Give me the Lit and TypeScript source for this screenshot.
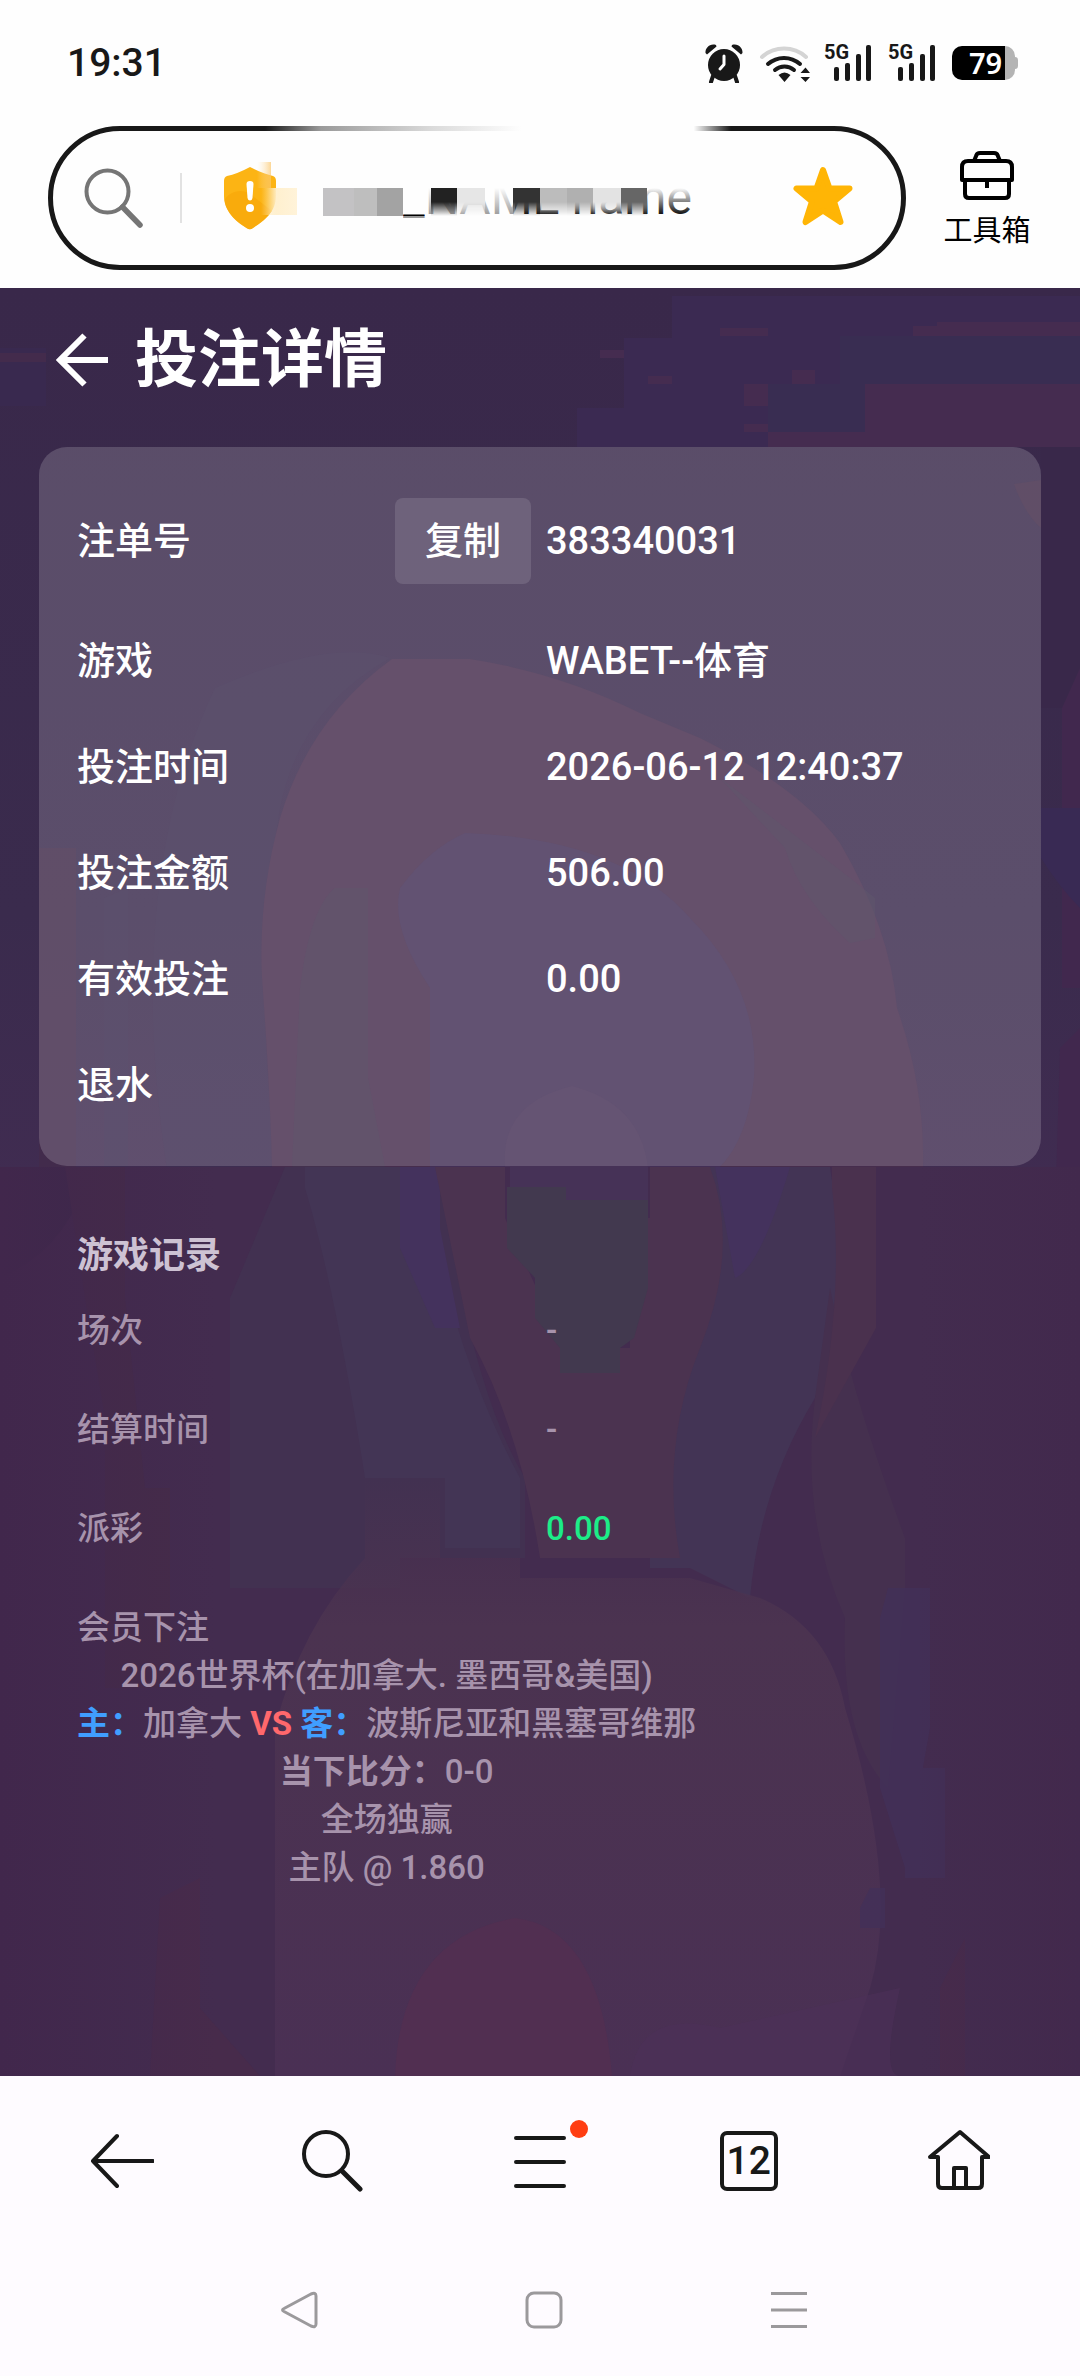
import { LitElement, html, css, svg } from "lit";
import { customElement } from "lit/decorators.js";

const FONT = css`Roboto, "Noto Sans CJK SC", sans-serif`;

@customElement("status-bar")
class StatusBar extends LitElement {
  static styles = css`
    :host { display: block; font-family: ${FONT}; color: #181818; }
    .bar { display: flex; align-items: center; justify-content: space-between; height: 126px; padding: 0 62px 0 67px; }
    .time { font-size: 39px; font-weight: 500; line-height: 48px; }
    .icons { display: flex; align-items: center; gap: 14px; }
    .icons svg { display: block; }
    .net { font: 700 20px ${FONT}; }
    .battery { display: flex; align-items: center; width: 66px; height: 34px; }
    .cell { width: 63px; box-sizing: border-box; height: 34px; border-radius: 10px; text-align: center; padding-left: 4px;
      background: linear-gradient(90deg, #000 53px, #b4b4b4 53px); color: #fff;
      font: 600 29px/34px "Noto Sans", sans-serif; }
    .nub { width: 3px; height: 12px; border-radius: 0 3px 3px 0; background: #b4b4b4; }
  `;

  private signal() {
    return html`<svg width="50" height="64" viewBox="0 -12 50 64" fill="#181818" aria-hidden="true">
      <text class="net" x="0" y="16">5G</text>
      <rect x="10" y="24" width="5" height="14" rx="2" />
      <rect x="21" y="20" width="5" height="18" rx="2" />
      <rect x="32" y="11" width="5" height="27" rx="2" />
      <rect x="42" y="2" width="5" height="36" rx="2" />
    </svg>`;
  }

  render() {
    return html`<div class="bar">
      <span class="time">19:31</span>
      <div class="icons">
        <svg width="40" height="40" viewBox="0 0 40 40" fill="#181818" aria-hidden="true">
          <circle cx="20" cy="22" r="16" />
          <path d="M1.500 10C1 5 6 0 12 2L12.500 3.500L3 11.500ZM38.500 10C39 5 34 0 28 2L27.500 3.500L37 11.500Z" />
          <path d="M9 33L7 39M31 33L33 39" stroke="#181818" stroke-width="4" stroke-linecap="round" />
          <path d="M20 13V21.500L16 26" fill="none" stroke="#fff" stroke-width="3" stroke-linecap="round" stroke-linejoin="round" />
        </svg>
        <svg width="52" height="42" viewBox="0 0 52 42" fill="none" stroke="#181818" stroke-width="4" stroke-linecap="round" aria-hidden="true">
          <path d="M4 15A33 33 0 0 1 48 15" stroke="#d4d4d4" />
          <path d="M10 22A24 24 0 0 1 42 22" />
          <path d="M17 28A15 15 0 0 1 36 28" />
          <path d="M20.500 33Q26.500 28 32.500 33L26.500 40ZM42.500 31L47.500 25.500L52 31ZM42.500 35L47.500 40L52 35Z" fill="#181818" stroke="none" />
        </svg>
        ${this.signal()}${this.signal()}
        <div class="battery"><span class="cell">79</span><span class="nub"></span></div>
      </div>
    </div>`;
  }
}

@customElement("address-bar")
class AddressBar extends LitElement {
  static styles = css`
    :host { display: block; font-family: ${FONT}; }
    .row { display: flex; align-items: center; gap: 26px; padding: 0 38px 18px 48px; }
    .box { position: relative; flex: 1; min-width: 0; display: flex; align-items: center; height: 144px; box-sizing: border-box;
      padding: 0 46px 0 31px; border: 5px solid #181818; border-radius: 72px; }
    .fade { position: absolute; top: -6px; left: 25%; right: 20%; height: 8px; pointer-events: none;
      background: linear-gradient(90deg, #fefefe00 0, #fefefe90 12%, #fefefed8 36%, #fefefe 55%, #fefefe 92%, #fefefe00 100%); }
    .search, .fav, .tools { border: 0; padding: 0; background: none; display: block; }
    svg { display: block; flex: none; }
    .rule { width: 2px; height: 50px; margin: 0 37px 0 36px; background: #e2e2e2; }
    .field { position: relative; flex: 1; min-width: 0; height: 72px; }
    .url { width: 100%; height: 72px; box-sizing: border-box; padding: 0 0 0 104px; border: 0; outline: 0; background: none;
      color: #000; font: 400 48px/72px ${FONT}; }
    .mosaic { position: absolute; left: 0; top: 0; pointer-events: none; }
    .tools { width: 110px; color: #000; font: 400 29px/36px ${FONT}; }
    .tools svg { margin: 2px auto 12px; }
  `;

  render() {
    const tiles: [number, number, string][] = [
      [24, 31, "#c3c2c4"], [55, 23, "#bebebe"], [78, 26, "#a3a3a3"],
      [132, 26, "#222"], [158, 28, "#e6e6e6"], [214, 27, "#333"],
      [241, 27, "#bcbcbc"], [268, 26, "#b0b0b0"], [294, 28, "#e3e3e3"], [322, 26, "#666"],
    ];
    return html`<div class="row">
      <form class="box" role="search">
        <span class="fade"></span>
        <button class="search" type="button" aria-label="搜索">
          <svg width="60" height="60" viewBox="0 0 60 60" fill="none" stroke="#757575" aria-hidden="true">
            <circle cx="23.500" cy="23.500" r="21" stroke-width="4" />
            <path d="M38.500 39L56 57" stroke-width="5.500" stroke-linecap="round" />
          </svg>
        </button>
        <span class="rule"></span>
        <svg width="80" height="72" viewBox="0 0 80 72" aria-hidden="true">
          <defs>
            <linearGradient id="up" x1="0" x2="1"><stop offset="0" stop-color="#ffe9c0" stop-opacity="0" /><stop offset="1" stop-color="#fbc66a" /></linearGradient>
            <linearGradient id="side" x1="0" x2="1"><stop offset="0" stop-color="#fde3a4" stop-opacity="0" /><stop offset=".45" stop-color="#fff0cf" /><stop offset="1" stop-color="#fff3d9" /></linearGradient>
          </defs>
          <path d="M31 5Q18 12 8 14Q5 15 5 19V34C5 50 18 60 27.500 66Q31 68.500 34 66C45 59 57 50 57 34V19Q57 15 54 14Q44 12 31 5Z" fill="#fcb414" />
          <path d="M5.500 38C10 30 22 26 31 32L53 49Q46 58 34 66Q31 68.500 27.500 66C18 60 7 51 5.500 38Z" fill="#f8a608" opacity=".7" />
          <rect x="38" y="0" width="14" height="26" fill="url(#up)" opacity=".7" />
          <rect x="42" y="26" width="36" height="27" fill="url(#side)" />
          <path d="M27.500 22Q27.500 19 31 19Q34.500 19 34.500 22L33.500 36Q33 38.500 31 38.500Q29 38.500 28.500 36Z" fill="#fff" />
          <circle cx="31" cy="46" r="4" fill="#fff" />
        </svg>
        <div class="field">
          <input class="url" aria-label="网址" .value=${"_NAME name"} />
          <svg class="mosaic" width="408" height="72" viewBox="0 0 408 72" aria-hidden="true">
            <defs>
              <linearGradient id="veil" x1="0" x2="0" y1="0" y2="1"><stop offset="0" stop-color="#fefefe" /><stop offset=".3" stop-color="#fefefe" stop-opacity=".7" /><stop offset="1" stop-color="#fefefe" stop-opacity="0" /></linearGradient>
              <linearGradient id="mask" x1="0" x2="0" y1="0" y2="1"><stop offset="0" stop-color="#fff" /><stop offset=".5" stop-color="#fff" /><stop offset="1" stop-color="#fff" stop-opacity="0" /></linearGradient>
              <mask id="half"><rect width="126" height="72" fill="#fff" /><rect x="126" y="26" width="282" height="28" fill="url(#mask)" /></mask>
            </defs>
            <rect width="408" height="26" fill="#fefefe" />
            <rect x="126" y="26" width="282" height="28" fill="url(#veil)" />
            <rect x="126" y="26" width="90" height="28" fill="#fefefe" opacity=".6" />
            <rect x="104" y="54" width="24" height="4" fill="#fefefe" opacity=".6" />
            <g mask="url(#half)">${tiles.map(([x, w, c]) => svg`<rect x=${x} y="26" width=${w} height="28" fill=${c} />`)}</g>
          </svg>
        </div>
        <button class="fav" type="button" aria-label="收藏">
          <svg width="64" height="64" viewBox="0 0 64 64" fill="#ffb505" stroke="#ffb505" stroke-width="6" stroke-linejoin="round" aria-hidden="true">
            <path d="M32 4L38.500 22.500H58.500L43 35.500L49.500 56L32 44.500L14.500 56L21 35.500L5.500 22.500H25.500Z" />
          </svg>
        </button>
      </form>
      <button class="tools" type="button">
        <svg width="56" height="52" viewBox="0 0 56 52" fill="none" stroke="#000" stroke-width="4" stroke-linejoin="round" aria-hidden="true">
          <path d="M15 12L17.500 6Q18 4 21 4H35Q38 4 38.500 6L41 12M3 31V18Q3 12 9 12H47Q53 12 53 18V31ZM6 31V45Q6 49 10 49H46Q50 49 50 45V31M28 31V39" />
        </svg>
        工具箱
      </button>
    </div>`;
  }
}

@customElement("bet-backdrop")
class BetBackdrop extends LitElement {
  static styles = css`
    :host { display: block; overflow: hidden; }
    .art { display: block; width: 100%; height: 100%; }
  `;

  render() {
    return html`<svg class="art" viewBox="0 0 1080 1788" preserveAspectRatio="none" aria-hidden="true">
      <defs>
        <linearGradient id="base" x1="0" x2="0" y1="0" y2="1">
          <stop offset="0" stop-color="#39284a" /><stop offset=".35" stop-color="#3a2b4d" />
          <stop offset=".5" stop-color="#402c51" /><stop offset=".7" stop-color="#432b4d" /><stop offset="1" stop-color="#43294d" />
        </linearGradient>
        <linearGradient id="low" x1="0" x2="0" y1="0" y2="1">
          <stop offset="0" stop-color="#4b3350" stop-opacity="0" /><stop offset=".25" stop-color="#4b3350" /><stop offset="1" stop-color="#4a3054" />
        </linearGradient>
        <linearGradient id="sides" x1="0" x2="1">
          <stop offset="0" stop-color="#41274c" /><stop offset=".2" stop-color="#41274c" stop-opacity="0" />
          <stop offset=".85" stop-color="#42294d" stop-opacity="0" /><stop offset="1" stop-color="#42294d" />
        </linearGradient>
      </defs>
      <rect width="1080" height="1788" fill="url(#base)" />
      <path d="M0 60H46V118H0Z" fill="#39294f" />
      <path d="M0 65H46V74H0Z" fill="#432b4c" />
      <path d="M672 8H1080V159H577V120H624V50H672Z" fill="#3b2a52" />
      <path d="M840 48H1080V96H865V144H768V96H840Z" fill="#392d52" />
      <path d="M865 96H1080V159H768V144H865Z" fill="#452c50" />
      <path d="M937 34H1080V48H913V38H937ZM720 40H768V48H720ZM600 62H624V70H600ZM648 88H672V96H648ZM744 96H768V118H744ZM792 82H815V96H792ZM744 136H768V144H744Z" fill="#452c50" />
      <path d="M1041 159H1080V420H1041Z" fill="#39284a" />
      <path d="M1014 196L1041 192V240Q1024 225 1014 196Z" fill="#462d48" opacity=".6" />
      <path d="M1062 420L1080 380V700H1062ZM1060 760L1080 740V1100H1050Z" fill="#41284e" />
      <path d="M1041 520H1080V620Q1060 600 1041 570Z" fill="#392a54" />
      <path d="M39 560H76V880H39Z" fill="#442c49" opacity=".6" />
      <path d="M104 610V900H128V600ZM215 400Q120 600 170 900H280Q250 700 280 520Q300 420 390 370Q330 350 215 400Z" fill="#3c2f52" opacity=".4" />
      <path d="M392 371H470Q560 385 640 425L700 450Q800 500 840 555Q890 640 897 720Q925 800 923 879H272Q270 800 262 690Q258 610 280 530Q310 430 392 371Z" fill="#462d4d" />
      <path d="M335 600H368V790L385 879H292L300 700Q310 620 335 600ZM720 490Q760 520 850 590L875 610V650L850 655Q800 610 785 560Z" fill="#40364f" opacity=".5" />
      <path d="M430 879V700Q390 640 400 600Q430 560 465 545Q620 550 690 630Q760 700 754 790Q748 850 720 879Z" fill="#432f56" />
      <path d="M0 879H1080V1788H0Z" fill="#432c4f" />
      <path d="M0 879H90Q70 960 0 990Z" fill="#3a294a" />
      <path d="M65 879H125V1010L145 1200H170V1400H105V1130L85 1010Z" fill="#452c49" />
      <path d="M285 879H440Q470 1100 525 1190V1270H400V1300H230V1010Z" fill="#423151" />
      <path d="M305 879H420Q450 1060 520 1190V1260H445V1190H365Q335 1000 305 900Z" fill="#433555" />
      <path d="M650 879H830Q850 1000 815 1110Q760 1200 750 1310L690 1280H650Z" fill="#433455" />
      <path d="M830 1000Q850 1100 905 1250V1300L888 1500Q840 1450 845 1330Q800 1230 815 1110Z" fill="#45304f" />
      <path d="M400 879H440V940L460 1040H435L400 960ZM715 879H790Q760 980 735 990Z" fill="#44325d" />
      <path d="M435 879H505V930Q540 1010 565 1060H630V930H650V879H710Q740 960 700 1060Q660 1160 680 1270H540Q520 1140 470 1050Z" fill="#4b3350" />
      <path d="M832 879H876V1040L815 1150Q845 1010 832 900Z" fill="#4a314e" />
      <path d="M365 1190H440V1270H520V1290H690L760 1310Q830 1340 845 1420Q900 1600 870 1700L840 1788H275V1440Q300 1340 365 1270Z" fill="url(#low)" />
      <path d="M510 899V879H505Q500 815 572 798Q640 815 648 879V914H565V899Z" fill="#463257" />
      <path d="M507 899H566V912H648V1000L634 1050L620 1060V1085H560V1060L535 1030V990L507 960Z" fill="#42394f" />
      <path d="M888 1300H930V1440L905 1580L880 1500V1330ZM905 1480H945V1590H905ZM870 1600H885V1640H860V1620Z" fill="#42315a" opacity=".7" />
      <path d="M160 1610L200 1590V1720L260 1788H150ZM940 1700L965 1650V1788H940ZM1050 1450H1080V1788H1050Z" fill="#472b4b" />
      <path d="M395 1788Q400 1650 515 1630Q600 1640 612 1788Z" fill="#512f51" />
      <path d="M630 1788Q640 1720 720 1740L900 1700Q880 1788 900 1788Z" fill="#4c3158" opacity=".6" />
      <rect y="879" width="1080" height="909" fill="url(#sides)" />
    </svg>`;
  }
}

@customElement("bet-detail")
class BetDetail extends LitElement {
  static styles = css`
    :host { display: grid; font-family: ${FONT}; color: #fff; }
    .back-layer, .page { grid-area: 1 / 1; }
    .back-layer { height: 100%; min-height: 0; contain: size; }
    .page { z-index: 1; padding: 0 39px 40px; }
    .head { display: flex; align-items: center; gap: 26px; height: 146px; padding: 0 0 2px 16px; box-sizing: border-box; }
    .back { border: 0; padding: 0; background: none; }
    .back svg { display: block; }
    .title { margin: 0; font-size: 63px; font-weight: 700; line-height: 84px; }
    .card { display: grid; gap: 48px; margin-top: 13px; padding: 51px 38px 52px; border-radius: 28px; background: rgba(255, 255, 255, .17);
      font-size: 38px; font-weight: 500; line-height: 58px; }
    .row { display: grid; grid-template-columns: 1fr 1fr; column-gap: 12px; align-items: center; }
    .row span { display: flex; align-items: center; justify-content: space-between; }
    .copy { margin-right: 3px; width: 136px; height: 86px; padding: 0; border: 0; border-radius: 8px; background: rgba(255, 255, 255, .12);
      color: #fff; font: inherit; }
    .log { padding: 66px 38px 0; font-size: 33px; font-weight: 500; line-height: 48px; color: #a793ac; }
    .subtitle { margin: 0 0 27px; font-size: 36px; font-weight: 700; line-height: 48px; color: #cdc2d3; }
    .items { display: grid; gap: 51px; }
    .win { color: #1ced88; }
    .bet { display: inline-block; text-align: center; }
    .bet p { margin: 0; }
    .side { color: #409eff; }
    .vs { color: #ff686c; }
  `;

  private row(label: string, value: unknown, action: unknown = "") {
    return html`<div class="row"><span>${label}${action}</span><span>${value}</span></div>`;
  }

  render() {
    return html`
      <bet-backdrop class="back-layer"></bet-backdrop>
      <div class="page">
        <header class="head">
          <button class="back" type="button" aria-label="返回">
            <svg width="54" height="54" viewBox="0 0 54 54" fill="none" stroke="#fff" stroke-width="6" aria-hidden="true">
              <path d="M29.500 2.500L5 27L29.500 51.500M5 27H53" />
            </svg>
          </button>
          <h1 class="title">投注详情</h1>
        </header>
        <section class="card">
          ${this.row("注单号", "383340031", html`<button class="copy" type="button">复制</button>`)}
          ${this.row("游戏", "WABET--体育")}
          ${this.row("投注时间", "2026-06-12 12:40:37")}
          ${this.row("投注金额", "506.00")}
          ${this.row("有效投注", "0.00")}
          ${this.row("退水", "")}
        </section>
        <section class="log">
          <h2 class="subtitle">游戏记录</h2>
          <div class="items">
            ${this.row("场次", "-")}
            ${this.row("结算时间", "-")}
            ${this.row("派彩", html`<output class="win">0.00</output>`)}
            ${this.row("会员下注", "")}
          </div>
          <div class="bet">
            <p>2026世界杯(在加拿大. 墨西哥&amp;美国)</p>
            <p><b class="side">主：</b>加拿大 <b class="vs">VS</b> <b class="side">客：</b>波斯尼亚和黑塞哥维那</p>
            <p><b>当下比分：</b>0-0</p>
            <p>全场独赢</p>
            <p>主队 @ 1.860</p>
          </div>
        </section>
      </div>`;
  }
}

@customElement("bottom-bars")
class BottomBars extends LitElement {
  static styles = css`
    :host { display: block; background: #fefbff; font-family: ${FONT}; }
    .nav { display: grid; grid-template-columns: repeat(5, 1fr); align-items: center; justify-items: center; height: 170px; padding: 0 18px; }
    .sys { display: grid; grid-template-columns: repeat(3, 245px); justify-content: center; align-items: center; justify-items: center;
      height: 130px; padding: 0 0 2px 8px; box-sizing: border-box; }
    .btn { position: relative; border: 0; padding: 0; background: none; color: #181818; }
    .btn svg { display: block; }
    .dot { position: absolute; right: -16px; top: -9px; width: 18px; height: 18px; border-radius: 50%; background: #ff3d12; }
    .tabs { width: 58px; height: 60px; box-sizing: border-box; border: 4px solid #181818; border-radius: 7px;
      font: 500 39px/52px ${FONT}; }
  `;

  render() {
    const s = (body: unknown) => html`<svg width="64" height="64" viewBox="0 0 64 64" fill="none" stroke="#181818" stroke-width="4"
      stroke-linecap="round" stroke-linejoin="round" aria-hidden="true">${body}</svg>`;
    const t = (body: unknown) => html`<svg width="40" height="40" viewBox="0 0 40 40" fill="none" stroke="#9b999c" stroke-width="3"
      stroke-linejoin="round" aria-hidden="true">${body}</svg>`;
    return html`
      <nav class="nav">
        <button class="btn" type="button" aria-label="后退">${s(svg`<path d="M27 7L3 32L27 57M3 32H63" />`)}</button>
        <button class="btn" type="button" aria-label="搜索">${s(svg`<circle cx="27" cy="25" r="22" /><path d="M43 42L61 60" stroke-width="5" />`)}</button>
        <button class="btn" type="button" aria-label="菜单">${s(svg`<path d="M8 9H56M8 33H56M8 57H56" />`)}<span class="dot"></span></button>
        <button class="btn tabs" type="button" aria-label="标签页">12</button>
        <button class="btn" type="button" aria-label="主页">${s(svg`<path d="M12 28H4L34 3L63 28H56V55Q56 59 52 59H16Q12 59 12 55ZM28 59V39H40V59" />`)}</button>
      </nav>
      <div class="sys">
        <button class="btn" type="button" aria-label="系统返回">${t(svg`<path d="M5 18.500L32 4Q37 2 37 6V34Q37 38 32 36L5 21.500Q2 20 5 18.500Z" />`)}</button>
        <button class="btn" type="button" aria-label="系统主屏">${t(svg`<rect x="3" y="3" width="34" height="34" rx="7" />`)}</button>
        <button class="btn" type="button" aria-label="最近任务">${t(svg`<path d="M2 3.500H38M2 20H38M2 36.500H38" />`)}</button>
      </div>`;
  }
}

@customElement("app-root")
class AppRoot extends LitElement {
  static styles = css`
    :host { display: flex; flex-direction: column; min-height: 100vh; background: #fefefe; }
    .main { flex: 1; }
  `;

  render() {
    return html`
      <status-bar></status-bar>
      <address-bar></address-bar>
      <bet-detail class="main"></bet-detail>
      <bottom-bars></bottom-bars>`;
  }
}
